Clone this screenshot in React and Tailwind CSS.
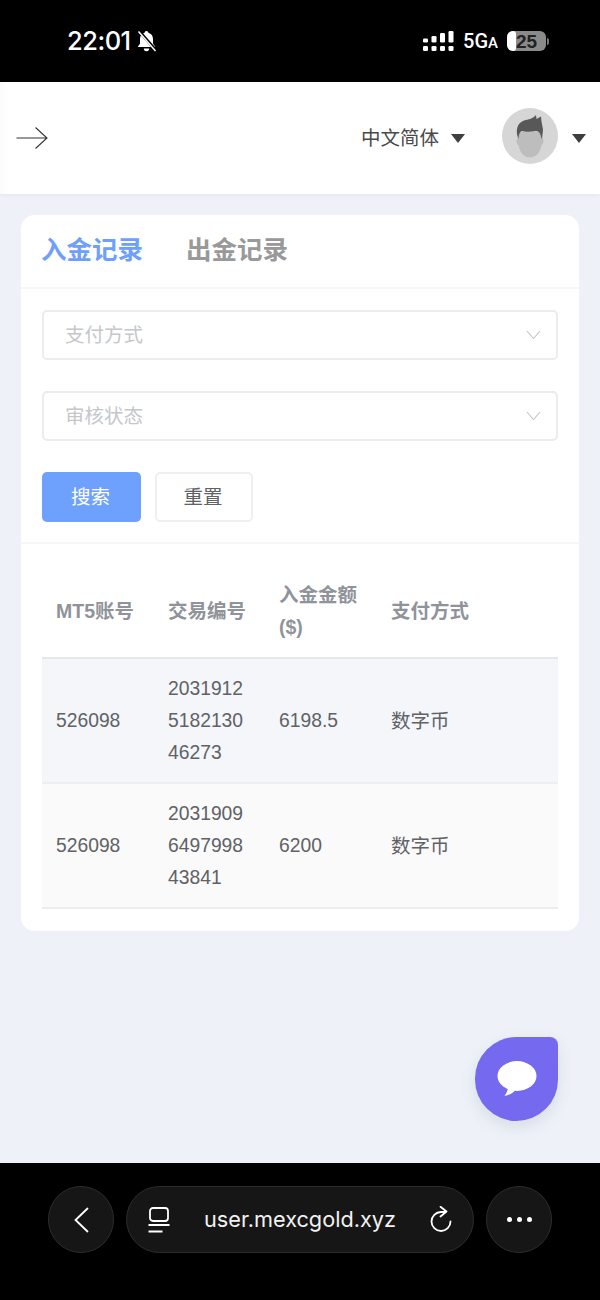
import React from 'react';

const FONT = "font-['Liberation_Sans','Noto_Sans_CJK_SC',sans-serif]";

const rows = [
  { account: '526098', trade: ['2031912', '5182130', '46273'], amount: '6198.5', pay: '数字币', bg: 'bg-[#f4f6fa]' },
  { account: '526098', trade: ['2031909', '6497998', '43841'], amount: '6200', pay: '数字币', bg: 'bg-[#fafafa]' },
];

function Caret({ className }) {
  return (
    <svg width="14" height="9" viewBox="0 0 14 9" className={className}>
      <path d="M0 0h14L7 9z" fill="#3f3f3f" />
    </svg>
  );
}

function Select({ label }) {
  return (
    <div className="flex h-[50px] items-center justify-between rounded-[5px] border-2 border-[#ebecef] pl-[21px] pr-[15px] text-[19.5px] text-[#c5c7cb]">
      <span className="pt-[2px]">{label}</span>
      <svg width="15" height="10" viewBox="0 0 15 10" fill="none" stroke="#c0c3c8" strokeWidth="1.100">
        <path d="M1 1l6.500 7.500L14 1" />
      </svg>
    </div>
  );
}

function StatusBar() {
  return (
    <div className="flex h-[82px] shrink-0 items-center justify-between bg-black pl-[67px] pr-[51px] text-white">
      <div className="flex items-center gap-[5px]">
        <span className="font-['Inter',sans-serif] text-[25.500px] font-medium tracking-[-0.5px]">22:01</span>
        <svg width="21" height="23" viewBox="0 0 21 23">
          <path d="M10.500 1c1.100 0 1.800.8 1.900 1.800 3 .8 4.600 3.200 4.600 6.400v4.300l2.300 3.500H1.700L4 13.500V9.200c0-3.200 1.600-5.600 4.600-6.400C8.700 1.800 9.400 1 10.500 1zM7.800 18.500h5.400a2.700 2.700 0 0 1-5.400 0z" fill="#fff" />
          <path d="M3 1l17 19.500" stroke="#000" strokeWidth="3" />
          <path d="M2.500 1.500l17 19.500" stroke="#fff" strokeWidth="1.500" />
        </svg>
      </div>
      <div className="flex items-center gap-[9px]">
        <svg width="31" height="20" viewBox="0 0 31 20" fill="#fff">
          <rect x="0" y="7.500" width="5" height="4" rx="1.300" />
          <rect x="8.500" y="5" width="5" height="6.500" rx="1.300" />
          <rect x="17" y="2" width="5" height="9.500" rx="1.300" />
          <rect x="25.500" y="0" width="5" height="11.500" rx="1.300" />
          <rect x="0" y="15" width="5" height="5" rx="1.300" />
          <rect x="8.500" y="15" width="5" height="5" rx="1.300" />
          <rect x="17" y="15" width="5" height="5" rx="1.300" />
          <rect x="25.500" y="15" width="5" height="5" rx="1.300" />
        </svg>
        <span className="flex items-baseline font-['Roboto',sans-serif] text-[20px] font-medium leading-none">
          5G<span className="text-[15px]">A</span>
        </span>
        <div className="flex items-center gap-[1px]">
          <div className="relative flex h-[20px] w-[39px] items-center justify-center overflow-hidden rounded-[6px] bg-[#8a8a8a]">
            <div className="absolute inset-y-0 left-0 w-[9px] rounded-r-[3px] bg-white" />
            <span className="relative font-['Liberation_Sans',sans-serif] text-[19px] font-bold leading-none text-[#222]">25</span>
          </div>
          <div className="h-[7px] w-[2px] rounded-r bg-[#777]" />
        </div>
      </div>
    </div>
  );
}

function Header() {
  return (
    <header className="relative z-10 flex h-[112px] shrink-0 items-center justify-between bg-linear-to-r from-[#fafbfc] to-white to-[8px] pl-[16px] pr-[14px] shadow-[0_1px_4px_rgba(0,0,0,0.05)]">
      <svg width="32" height="24" viewBox="0 0 32 24" fill="none" stroke="#333" strokeWidth="1.100">
        <path d="M0.500 12H31M19.500 1.500L31 12 19.500 22.500" />
      </svg>
      <div className="flex items-center">
        <span className="mt-[2px] text-[19.5px] text-[#4a4a4a]">中文简体</span>
        <Caret className="ml-[12px]" />
        <svg width="56" height="56" viewBox="0 0 56 56" className="mb-[4px] ml-[37px]">
          <circle cx="28" cy="28" r="28" fill="#d6d6d6" />
          <path d="M14.500 33c0-2 .8-3 1.500-3v-6h24v6c.7 0 1.500 1 1.500 3s-1 4-2.200 4.500C38.500 44 34 49.500 28 49.500S17.500 44 16.700 37.500C15.500 37 14.500 35 14.500 33z" fill="#bdbdbd" />
          <path d="M16.500 31C13 23 15 15 22 12.500c4.500-1.500 8-1 12-5.500l.5 4 4.500-2.500.5 5 1.500 8-1 10-2-6c-1-1.500-2-2.500-4-2.500-5 1-11 1-14.500 0-2 1.500-3 4-3 8z" fill="#585858" />
        </svg>
        <Caret className="ml-[14px]" />
      </div>
    </header>
  );
}

function RecordTable() {
  return (
    <table className="w-full table-fixed border-collapse text-[19.5px] leading-[32px]">
      <thead>
        <tr className="h-[93px] border-b-2 border-[#e4e7ec] font-bold text-[#909399]">
          <th className="w-[112px] px-[14px] text-left font-bold">MT5账号</th>
          <th className="w-[111px] px-[14px] text-left font-bold">交易编号</th>
          <th className="w-[112px] px-[14px] text-left font-bold">入金金额<br />($)</th>
          <th className="px-[14px] text-left font-bold">支付方式</th>
        </tr>
      </thead>
      <tbody className="text-[#606266]">
        {rows.map((row) => (
          <tr key={row.trade[0]} className={`h-[125px] border-b-2 border-[#eceef2] ${row.bg}`}>
            <td className="px-[14px] text-[19.3px]">{row.account}</td>
            <td className="px-[14px] text-[19.3px]">
              {row.trade.map((part) => (
                <div key={part}>{part}</div>
              ))}
            </td>
            <td className="px-[14px] text-[19.3px]">{row.amount}</td>
            <td className="px-[14px]">{row.pay}</td>
          </tr>
        ))}
      </tbody>
    </table>
  );
}

function BottomBar() {
  return (
    <div className="flex h-[137px] shrink-0 items-start gap-[12px] bg-black pl-[48px] pt-[23px] text-white">
      <div className="flex h-[67px] w-[66px] items-center justify-center rounded-full border border-[#2c2c2c] bg-[#161616]">
        <svg width="15" height="26" viewBox="0 0 15 26" fill="none" stroke="#fff" strokeWidth="1.800" strokeLinecap="round">
          <path d="M13.500 1.500L1.500 13l12 11.500" />
        </svg>
      </div>
      <div className="flex h-[67px] w-[348px] items-center rounded-full border border-[#2c2c2c] bg-[#161616] pl-[21px] pr-[21px]">
        <svg width="22" height="26" viewBox="0 0 22 26" fill="none" stroke="#fff" strokeWidth="1.800">
          <rect x="2" y="1" width="18" height="13" rx="3" />
          <path d="M0.500 18h21M0.500 24.500h14" />
        </svg>
        <span className="ml-[34px] flex-1 font-['Inter',sans-serif] text-[21.700px] text-[#f2f2f2]">user.mexcgold.xyz</span>
        <svg width="22" height="27" viewBox="0 0 22 27" fill="none" stroke="#fff" strokeWidth="1.800" strokeLinecap="round" strokeLinejoin="round">
          <path d="M11 6A9.500 9.500 0 1 0 20.500 15.500M10.500 .8L16.500 5.500 10.500 10.500M11 6h5" />
        </svg>
      </div>
      <div className="flex h-[67px] w-[66px] items-center justify-center gap-[5px] rounded-full border border-[#2c2c2c] bg-[#161616]">
        <span className="size-[5px] rounded-full bg-white" />
        <span className="size-[5px] rounded-full bg-white" />
        <span className="size-[5px] rounded-full bg-white" />
      </div>
    </div>
  );
}

export default function App() {
  return (
    <div className={`flex h-[1300px] w-[600px] flex-col overflow-hidden ${FONT}`}>
      <StatusBar />
      <Header />

      <main className="relative flex-1 bg-[#eef2f8] px-[21px] pt-[21px]">
        <div className="rounded-[14px] bg-white">
          <div className="flex h-[74px] items-center gap-[43px] border-b-2 border-[#f5f6f8] px-[20px] pb-[1px] text-[25.5px] font-bold">
            <span className="text-[#6ea0fb]">入金记录</span>
            <span className="text-[#999]">出金记录</span>
          </div>

          <div className="flex flex-col gap-[31px] px-[21px] pt-[21px]">
            <Select label="支付方式" />
            <Select label="审核状态" />
          </div>

          <div className="flex gap-[14px] border-b-2 border-[#f5f6f8] px-[21px] pb-[20px] pt-[31px] text-[19.5px]">
            <button className="h-[50px] w-[99px] rounded-[5px] bg-[#6ea0fd] pr-[2px] pt-[2px] text-white">搜索</button>
            <button className="h-[50px] w-[98px] rounded-[5px] border-2 border-[#eeeff1] bg-white pr-[2px] pt-[2px] text-[#606266]">重置</button>
          </div>

          <div className="px-[21px] pb-[22px] pt-[21px]">
            <RecordTable />
          </div>
        </div>

        <div className="absolute right-[42px] top-[843px] flex h-[84px] w-[83px] items-center justify-center rounded-[42px_8px_42px_42px] bg-[#7469ef] shadow-[0_6px_16px_rgba(60,60,90,0.12)]">
          <svg width="40" height="36" viewBox="0 0 40 36">
            <ellipse cx="20" cy="15" rx="19.500" ry="15" fill="#fff" />
            <path d="M11 26c0 3-1.500 6-3.500 9 4-.5 8-2.500 10.500-5.500z" fill="#fff" />
          </svg>
        </div>
      </main>

      <BottomBar />
    </div>
  );
}
